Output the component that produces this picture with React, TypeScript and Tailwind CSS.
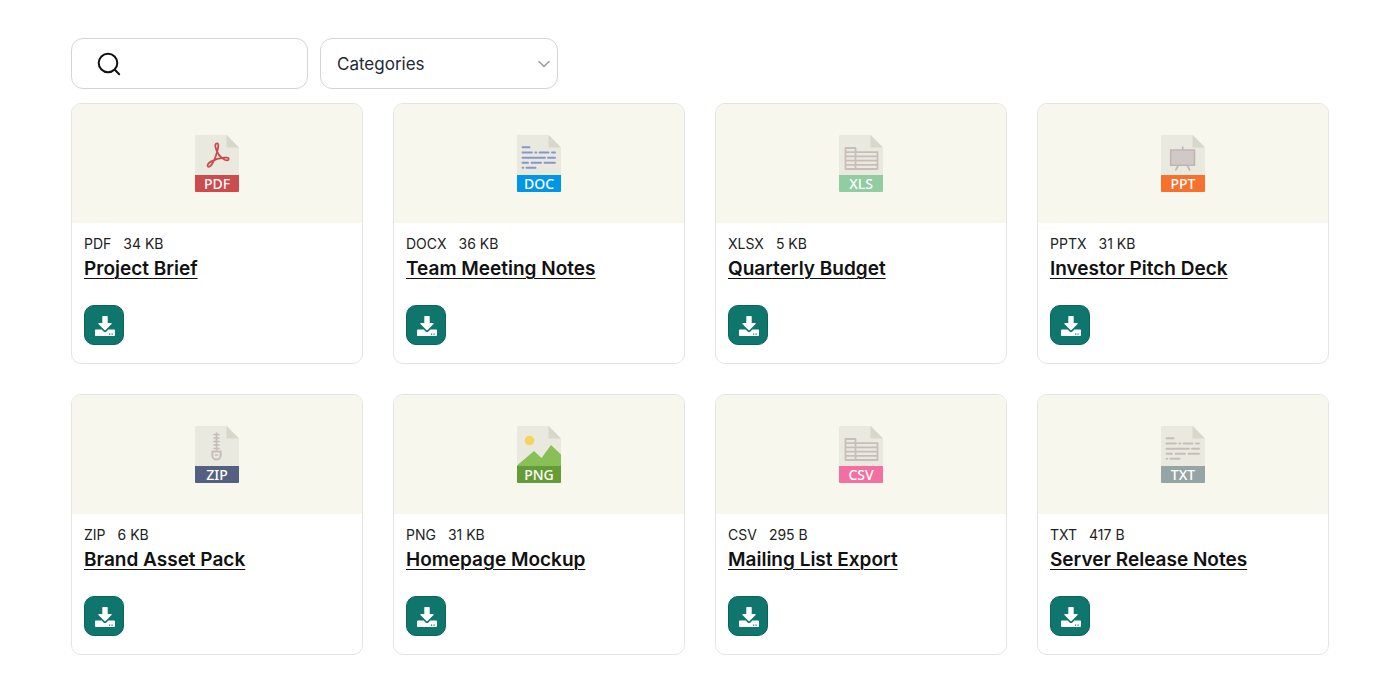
import React, { useState } from 'react';

interface FileItem {
  id: number;
  title: string;
  type: string;
  label: string;
  size: string;
  color: string;
}

const FILES: FileItem[] = [
  { id: 1, title: 'Project Brief', type: 'PDF', label: 'PDF', size: '34 KB', color: '#cc4b4c' },
  { id: 2, title: 'Team Meeting Notes', type: 'DOCX', label: 'DOC', size: '36 KB', color: '#0096e6' },
  { id: 3, title: 'Quarterly Budget', type: 'XLSX', label: 'XLS', size: '5 KB', color: '#91cda0' },
  { id: 4, title: 'Investor Pitch Deck', type: 'PPTX', label: 'PPT', size: '31 KB', color: '#f6712e' },
  { id: 5, title: 'Brand Asset Pack', type: 'ZIP', label: 'ZIP', size: '6 KB', color: '#556080' },
  { id: 6, title: 'Homepage Mockup', type: 'PNG', label: 'PNG', size: '31 KB', color: '#659c35' },
  { id: 7, title: 'Mailing List Export', type: 'CSV', label: 'CSV', size: '295 B', color: '#f36fa0' },
  { id: 8, title: 'Server Release Notes', type: 'TXT', label: 'TXT', size: '417 B', color: '#95a5a5' },
];

const TextLines: React.FC<{ color: string }> = ({ color }) => (
  <path
    d="M5.5 12.3h7M5.5 17.5h9.5M18.3 17.5h1M22.5 17.5h9M35 17.5h3M5.5 22.7h22.5M31 22.7h7M5.5 27.8h5.5M14.5 27.8h9.5M27.5 27.8h10.5M5.5 32.8h.8M9.5 32.8h9"
    stroke={color}
    strokeWidth="1.9"
    strokeLinecap="round"
    fill="none"
  />
);

const Sheet: React.FC = () => (
  <path
    d="M6.5 13h10v21h-10zM16.5 17.2h22V34h-22zM6.5 17.2h10M6.5 21.4h32M6.5 25.600h32M6.5 29.800h32"
    stroke="#c8bdb8"
    strokeWidth="1.8"
    strokeLinejoin="round"
    fill="none"
  />
);

// Drawing above the colored strip
const Artwork: React.FC<{ label: string }> = ({ label }) => {
  switch (label) {
    case 'PDF':
      return (
        <path
          d="M22 8.300c-1.800 0-2 2.200-1.300 4.600 1.200 4.400 4.900 9.600 9 11.800 2 1 4 .8 4-.6 0-1.500-2.200-1.700-4.700-1.500-4.500.3-9.400 1.900-13.200 4-2.400 1.400-3.800 3.400-3 4.700.8 1.200 2.800.2 4.300-2.300 2.200-3.600 4.400-9 5.400-13.600.8-3.700 1.500-7.100-.5-7.100z"
          stroke="#cc4b4c"
          strokeWidth="1.8"
          strokeLinejoin="round"
          fill="none"
        />
      );
    case 'DOC':
      return <TextLines color="#8697cb" />;
    case 'TXT':
      return <TextLines color="#c8bdb8" />;
    case 'XLS':
    case 'CSV':
      return <Sheet />;
    case 'PPT':
      return (
        <g stroke="#c1b5b2" strokeWidth="1.6" fill="none" strokeLinecap="round">
          <path d="M21.700 12v3M17 31l-2.300 4M26.500 31l2.300 4" />
          <path d="M9.700 15h23.800v15.300H9.700z" fill="#d1c9c7" />
        </g>
      );
    case 'ZIP':
      return (
        <g stroke="#c8bdb8" strokeWidth="1.7" fill="none" strokeLinecap="round" strokeLinejoin="round">
          <path d="M21.500 7v17M19 8.500h5M19 12h5M19 15.500h5M19 19h5M19 22.500h5" />
          <path d="M17.300 25.500h8.400v3.700a4.200 4.200 0 0 1-8.400 0z" strokeWidth="2" />
          <path d="M20.500 29h2" />
        </g>
      );
    case 'PNG':
      return (
        <>
          <circle cx="12.500" cy="14.500" r="4.800" fill="#f3d55b" />
          <path d="M0 40.500V39.500L17 25l7.500 7L34 19l10 9.500V40.500z" fill="#88c057" />
        </>
      );
    default:
      return null;
  }
};

const FileIcon: React.FC<{ label: string; color: string }> = ({ label, color }) => (
  <svg viewBox="0 0 44 57" className="h-[57px] w-11" role="img" aria-label={`${label} file`}>
    <path d="M1 0h31l12 12.500V41H0V1a1 1 0 0 1 1-1z" fill="#e9e9e0" />
    <path d="M31.500 0v12.500H44z" fill="#d9d7ca" />
    <Artwork label={label} />
    <path d="M0 40h44v16a1 1 0 0 1-1 1H1a1 1 0 0 1-1-1z" fill={color} />
    <text x="22" y="54" textAnchor="middle" fill="#fff" className="font-['Noto_Sans',sans-serif] text-[14px] font-medium">
      {label}
    </text>
  </svg>
);

const DownloadIcon: React.FC = () => (
  <svg viewBox="0 0 20 20" className="h-5 w-5" fill="#fff" aria-hidden="true">
    <path d="M7.300.5a.5.500 0 0 1 .5-.5h4.400a.5.500 0 0 1 .5.500V7h3.300c.6 0 .9.600.5 1l-5.900 6a.8.800 0 0 1-1.200 0L3.500 8c-.4-.4-.1-1 .5-1h3.300z" />
    <path
      fillRule="evenodd"
      d="M.8 13.500h5.900l1.900 1.900a2 2 0 0 0 2.800 0l1.900-1.900h5.900c.4 0 .8.400.8.800v4.900c0 .4-.4.800-.8.800H.8a.8.800 0 0 1-.8-.8v-4.900c0-.4.4-.8.8-.8zM14 17.500v1.200h1.200v-1.200zM16.500 17.500v1.200h1.200v-1.200z"
    />
  </svg>
);

const FileCard: React.FC<{ file: FileItem }> = ({ file }) => (
  <article className="overflow-hidden rounded-[10px] border border-[#e3e4e4] bg-white">
    <div className="flex items-center justify-center bg-[#f8f7ee] py-[31px]">
      <FileIcon label={file.label} color={file.color} />
    </div>
    <div className="px-3 pt-[11px] pb-[18px]">
      <div className="flex gap-3 text-[14px] leading-5 text-[#222]">
        <span>{file.type}</span>
        <span>{file.size}</span>
      </div>
      <h3 className="text-[19px] leading-[30px] font-semibold text-[#111]">
        <a href="#" className="underline decoration-1 underline-offset-3">{file.title}</a>
      </h3>
      <button
        type="button"
        aria-label={`Download ${file.title}`}
        className="mt-[21px] flex h-10 w-10 items-center justify-center rounded-[10px] border border-[#0b655b] bg-[#0f766e] pt-px pl-px"
      >
        <DownloadIcon />
      </button>
    </div>
  </article>
);

export default function App() {
  const [query, setQuery] = useState('');

  const files = FILES.filter((file) => file.title.toLowerCase().includes(query.toLowerCase()));

  return (
    <main className="bg-white px-[71px] py-[38px] font-['Inter',sans-serif]">
      <div className="mb-[14px] flex gap-3">
        <div className="relative">
          <svg
            viewBox="0 0 24 24"
            className="pointer-events-none absolute top-[14px] left-[26px] h-6 w-6"
            fill="none"
            stroke="#111"
            strokeWidth="2"
            strokeLinecap="round"
            aria-hidden="true"
          >
            <circle cx="11" cy="11" r="9.300" />
            <path d="m17.800 17.800 4.400 4.400" />
          </svg>
          <input
            type="search"
            aria-label="Search files"
            value={query}
            onChange={(e) => setQuery(e.target.value)}
            className="h-[51px] w-[237px] rounded-xl border border-[#d1d5db] bg-white pr-4 pl-16 text-[17px] text-[#1f2937] outline-none"
          />
        </div>
        <div className="relative">
          <select
            aria-label="Categories"
            className="h-[51px] w-[238px] appearance-none rounded-xl border border-[#d1d5db] bg-white pt-[2px] pr-8 pl-4 text-[17px] text-[#1f2937] outline-none"
          >
            <option>Categories</option>
          </select>
          <svg
            viewBox="0 0 12 8"
            className="pointer-events-none absolute top-[22px] right-2 h-2 w-3"
            fill="none"
            stroke="#9a9ca3"
            strokeWidth="1.500"
            strokeLinecap="round"
            strokeLinejoin="round"
            aria-hidden="true"
          >
            <path d="m1 1.500 5 5 5-5" />
          </svg>
        </div>
      </div>

      <div className="grid grid-cols-1 gap-[30px] sm:grid-cols-2 lg:grid-cols-4">
        {files.map((file) => (
          <FileCard key={file.id} file={file} />
        ))}
      </div>
    </main>
  );
}
